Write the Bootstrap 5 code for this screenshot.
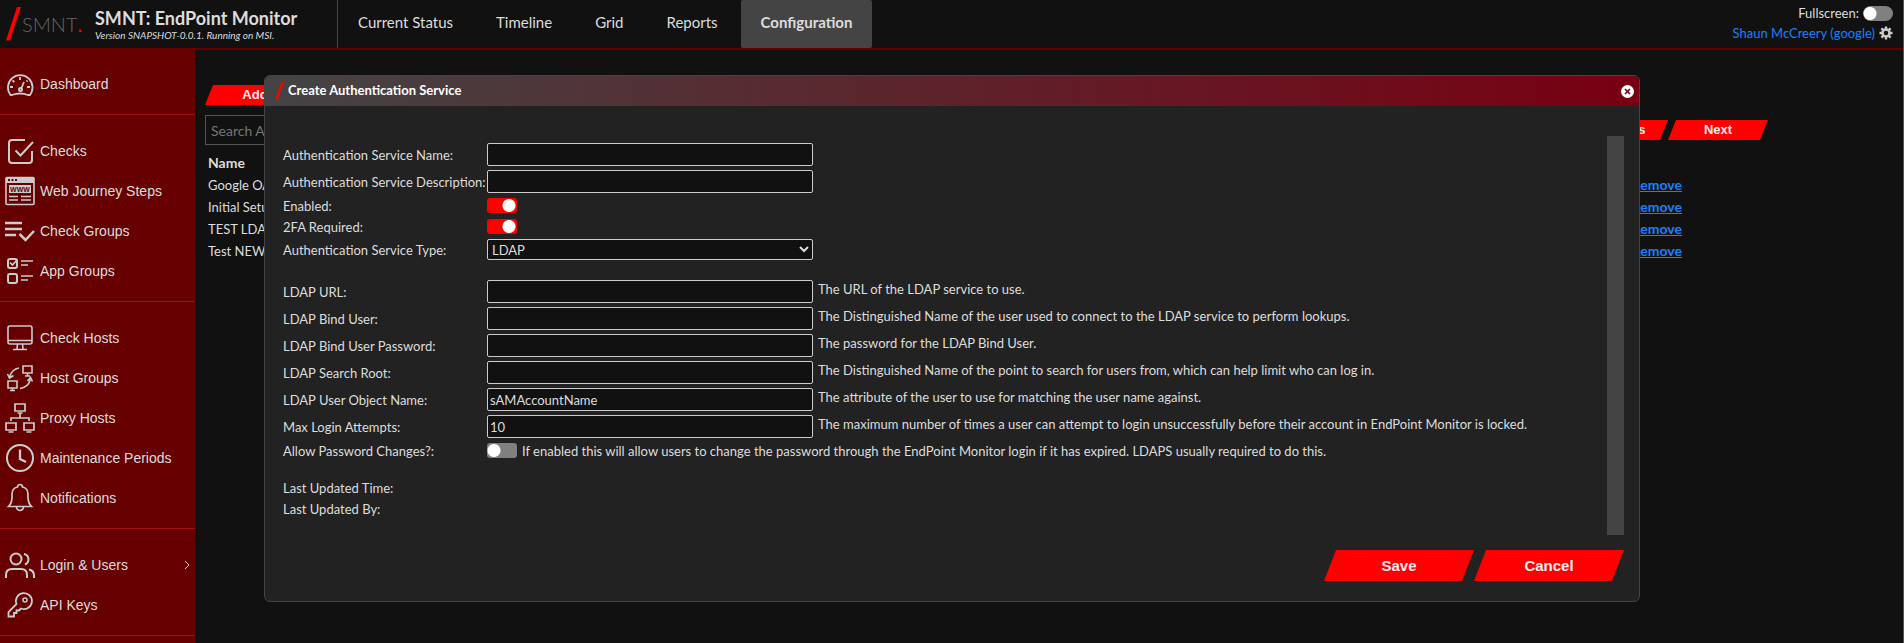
<!DOCTYPE html>
<html lang="en">
<head>
<meta charset="utf-8">
<meta name="viewport" content="width=device-width, initial-scale=1">
<title>SMNT: EndPoint Monitor</title>
<link href="https://cdn.jsdelivr.net/npm/bootstrap@5.3.0/dist/css/bootstrap.min.css" rel="stylesheet">
<style>
:root{--ink:#ddd;--maroon:#600;--panel:#222;--edge:#444}
html,body{height:100%}
body{background:#111;color:var(--ink);font:13px/20px Lato,Carlito,sans-serif;border-right:1px solid #555;overflow:hidden}
a{color:#1a80ff}
.topbar{height:50px;border-bottom:2px solid var(--maroon)}
.brand{width:338px;padding-left:6px;border-right:1px solid var(--edge)}
.brand-word{width:69px;font-size:20px;font-weight:300;color:#666;font-family:Lato,sans-serif}
.brand-word b{color:red}
.brand h1{font-size:18px;line-height:22px;font-weight:700}
.brand em{font-size:10px;line-height:12px}
.tabs{gap:3px}
.tabs .nav-link{height:48px;padding:12px 20px;color:var(--ink);font-size:15px;border-radius:2px}
.tabs .nav-link.active{background:var(--edge);font-weight:700}
.account{padding:3px 10px 0 0}
.switch{width:30px!important;height:15px!important;margin:0!important;border:0;border-radius:8px;float:none!important;background:radial-gradient(circle at 7px 50%,#fff 6px,transparent 7px),gray!important}
.switch:checked{background:radial-gradient(circle at 22px 50%,#fff 6px,transparent 7px),red!important}
.side{width:195px;background:var(--maroon);font:14px/20px "Liberation Sans",Arial,sans-serif}
.side ul{padding:16px 0 10px;border-bottom:1px solid #a01010}
.side ul:first-child{padding-top:14px}
.side .nav-link{height:40px;padding:0 5px;gap:5px;color:var(--ink)}
.side svg{width:30px;height:30px;fill:none;stroke:#ccc;stroke-width:2;flex:none}
.side .chev{width:6px;height:10px;stroke-width:1}
.side text{font:bold 7px "Liberation Sans",Arial,sans-serif;fill:var(--maroon);stroke:none}
.work{padding:35px 135px 0 10px}
.slant{width:100px;height:20px;padding:0;border:0;border-radius:0;background:red;color:#eee;font:bold 13px/20px "Liberation Sans",Arial,sans-serif;clip-path:polygon(8px 0,100% 0,calc(100% - 8px) 100%,0 100%)}
.slant.big{width:150px;height:31px;font-size:15px;line-height:31px;clip-path:polygon(12px 0,100% 0,calc(100% - 12px) 100%,0 100%)}
.tools{margin-top:10px}
.search{width:300px;height:30px;padding:0 5px;background:#111;border:1px solid #555;color:var(--ink);font-size:14px}
.search::placeholder{color:#757575}
.list{margin-top:7px}
.list th,.list td{height:22px;padding:0 3px;line-height:22px}
.list th,.list a{font-size:14px}
.list td:last-child,.list th:last-child{padding-right:86px}
.dialog{position:absolute;top:75px;left:264px;right:264px;background:var(--panel);border:1px solid var(--edge);border-radius:6px;overflow:hidden}
.dialog header{height:30px;padding:0 5px 0 10px;gap:4px;background:linear-gradient(90deg,#444,#780012)}
.dialog h2{font-size:13px;font-weight:700;color:#fff}
.shut{width:13px;height:13px;border:0;border-radius:50%;background:#fff;padding:0}
.shut svg{display:block;margin:auto}
.body-area{padding:30px 15px 20px 18px}
.form-area{height:399px;padding-top:5px}
.track{width:17px;background:var(--edge)}
.frow{display:flex;align-items:center;min-height:21px}
.frow.tall{min-height:27px}
.frow.pick{min-height:25px;margin-bottom:16px}
.frow>label,.frow>.cap{width:204px;white-space:nowrap}
.box{width:326px;height:23px;padding:0 2px;background:#111;border:1px solid #ccc;border-radius:2px;color:var(--ink)}
select.box{height:21px;padding:0}
.hint{padding:1px 0 0 5px;align-self:flex-start}
.acts{padding-top:15px}
</style>
</head>
<body class="d-flex flex-column">
<div class="topbar d-flex">
  <div class="brand d-flex align-items-center flex-shrink-0">
    <svg width="16" height="34" viewBox="0 0 16 34"><path d="M0 33.500 11 0h4L4 33.500z" fill="red"/></svg>
    <span class="brand-word">SMNT<b>.</b></span>
    <div class="ps-1"><h1 class="m-0">SMNT: EndPoint Monitor</h1><em class="d-block">Version SNAPSHOT-0.0.1. Running on MSI.</em></div>
  </div>
  <nav class="nav tabs flex-nowrap">
    <a class="nav-link" href="#">Current Status</a>
    <a class="nav-link" href="#">Timeline</a>
    <a class="nav-link" href="#">Grid</a>
    <a class="nav-link" href="#">Reports</a>
    <a class="nav-link active" href="#" aria-current="page">Configuration</a>
  </nav>
  <div class="account ms-auto d-flex flex-column align-items-end">
    <div class="form-switch p-0 d-flex align-items-center gap-1"><label for="full">Fullscreen:</label><input class="form-check-input switch" type="checkbox" role="switch" id="full"></div>
    <div class="d-flex align-items-center"><a class="text-decoration-none me-1" href="#">Shaun McCreery (google)</a>
      <svg width="14" height="14" viewBox="0 0 14 14"><g fill="none" stroke="#ccc"><circle cx="7" cy="7" r="3.500" stroke-width="2.500"/><path d="M7 .500v2.500M7 11v2.500M.500 7H3M11 7h2.500M2.400 2.400l1.800 1.800M9.800 9.800l1.800 1.800M11.600 2.400 9.800 4.200M4.200 9.800l-1.800 1.800" stroke-width="2.400"/></g></svg></div>
  </div>
</div>
<div class="d-flex flex-grow-1">
  <nav class="side flex-shrink-0" aria-label="Sections">
    <ul class="nav flex-column">
      <li><a class="nav-link d-flex align-items-center" href="#"><svg viewBox="0 0 30 30"><path d="M7 26H5.500A12.300 12.300 0 1 1 25 26H22.500M7 26q8-3 16 0M15 8v3M7.500 11.500l2 1.500M22.500 11.500l-1 1M5 18h3M22 18h3M16 20l3-7" stroke-width="1.800"/><circle cx="15.500" cy="20.500" r="1.500"/></svg>Dashboard</a></li>
    </ul>
    <ul class="nav flex-column">
      <li><a class="nav-link d-flex align-items-center" href="#"><svg viewBox="0 0 30 30"><path d="M20 4H7a3 3 0 0 0-3 3v17a3 3 0 0 0 3 3h17a3 3 0 0 0 3-3V15M10.500 14.500l5 5L28 6"/></svg>Checks</a></li>
      <li><a class="nav-link d-flex align-items-center" href="#"><svg viewBox="0 0 30 30"><rect x="1" y="1.500" width="28" height="27" rx="1" stroke-width="1.600"/><path d="M1 4.500h28" stroke-width="5"/><path d="M3 4h2M6.500 4h2M10 4h2" stroke="#600"/><rect x="4" y="9" width="22" height="8" fill="#ccc" stroke="none"/><text x="15" y="15.500" text-anchor="middle">WWW</text><path d="M4 20.500h9M4 24h9M16 20.500h10M16 24h10" stroke-width="1.700"/></svg>Web Journey Steps</a></li>
      <li><a class="nav-link d-flex align-items-center" href="#"><svg viewBox="0 0 30 30"><path d="M0 7h17M0 13h17M0 19h11M14.500 18l6 6 8.500-9" stroke-width="2.500"/></svg>Check Groups</a></li>
      <li><a class="nav-link d-flex align-items-center" href="#"><svg viewBox="0 0 30 30"><rect x="3" y="3" width="9" height="9" rx="2"/><rect x="3" y="18" width="9" height="9" rx="2"/><path d="M5 6.500l2.500 2.500 4-4.500M16 5h12M16 9h7M16 20h12M16 24h7" stroke-width="1.700"/></svg>App Groups</a></li>
    </ul>
    <ul class="nav flex-column">
      <li><a class="nav-link d-flex align-items-center" href="#"><svg viewBox="0 0 30 30"><path d="M5 3h20a2 2 0 0 1 2 2v14a2 2 0 0 1-2 2H5a2 2 0 0 1-2-2V5a2 2 0 0 1 2-2zM3 17.500h24M12.500 21l-.500 5M17.500 21l.500 5M8 26.500h14" stroke-width="1.600"/></svg>Check Hosts</a></li>
      <li><a class="nav-link d-flex align-items-center" href="#"><svg viewBox="0 0 30 30"><path stroke-width="1.600" d="M18 3h9v7h-9zM20 13h5M22.500 10v3M3 18h9v7H3zM5 27.500h5M7.500 25v2M14 5Q7 6 4.500 14M2.500 11l2 4 4-2.500M15 25.500q8-1 10.500-9M22.500 18l3-3.500 2 4"/></svg>Host Groups</a></li>
      <li><a class="nav-link d-flex align-items-center" href="#"><svg viewBox="0 0 30 30"><path d="M10 1h10v7H10zM12.500 10h5M15 10v5M6 18v-3h18v3M1 20h10v7H1zM19 20h10v7H19zM3.500 29h5M21.500 29h5" stroke-width="1.700"/></svg>Proxy Hosts</a></li>
      <li><a class="nav-link d-flex align-items-center" href="#"><svg viewBox="0 0 30 30"><circle cx="15" cy="15" r="13"/><path d="M15 6.500V16l6 3" stroke-width="2.300"/></svg>Maintenance Periods</a></li>
      <li><a class="nav-link d-flex align-items-center" href="#"><svg viewBox="0 0 30 30"><path d="M3.500 23.500Q7 20 7 14v-2.500Q7 5 12.500 4a2.500 2.500 0 0 1 5 0Q23 5 23 11.500V14q0 6 3.500 9.500zM11.500 24a3.500 3.500 0 0 0 7 0" stroke-width="1.700"/></svg>Notifications</a></li>
    </ul>
    <ul class="nav flex-column">
      <li><a class="nav-link d-flex align-items-center" href="#"><svg viewBox="0 0 30 30"><circle cx="11" cy="9" r="5.500"/><path d="M1 28v-3q0-6 6-6h9q6 0 6 6v3M19 4a5.500 5.500 0 0 1 1 10.500M24 19.500q5 1 5 6V28"/></svg>Login &amp; Users<svg class="chev ms-auto" viewBox="0 0 6 10"><path d="M1 1l4 4-4 4"/></svg></a></li>
      <li><a class="nav-link d-flex align-items-center" href="#"><svg viewBox="0 0 30 30"><path d="M11.500 14A8 8 0 1 1 16 18.500L14 20.500h-2.500V23H9v3.500H3.500V22z" stroke-width="1.800"/><circle cx="20" cy="10" r="2" stroke-width="1.500"/></svg>API Keys</a></li>
    </ul>
  </nav>
  <main class="work flex-grow-1">
    <button class="slant d-block" type="button">Add</button>
    <div class="tools d-flex justify-content-between align-items-center">
      <input class="search" type="search" placeholder="Search Authentication Services" aria-label="Search Authentication Services">
      <div class="d-flex"><button class="slant" type="button">Previous</button><button class="slant" type="button">Next</button></div>
    </div>
    <table class="list w-100">
      <thead><tr><th>Name</th><th></th></tr></thead>
      <tbody>
        <tr><td>Google OAuth</td><td class="text-end"><a class="fw-bold" href="#">Remove</a></td></tr>
        <tr><td>Initial Setup</td><td class="text-end"><a class="fw-bold" href="#">Remove</a></td></tr>
        <tr><td>TEST LDAP</td><td class="text-end"><a class="fw-bold" href="#">Remove</a></td></tr>
        <tr><td>Test NEW</td><td class="text-end"><a class="fw-bold" href="#">Remove</a></td></tr>
      </tbody>
    </table>
  </main>
</div>
<section class="dialog" role="dialog" aria-labelledby="dlg">
  <header class="d-flex align-items-center">
    <svg width="9" height="18" viewBox="0 0 9 18"><path d="M0 18 6.500 0H9L2.500 18z" fill="red"/></svg>
    <h2 class="m-0" id="dlg">Create Authentication Service</h2>
    <button class="shut ms-auto" type="button" aria-label="Close"><svg width="7" height="7" viewBox="0 0 7 7"><path d="M1 1l5 5M6 1 1 6" stroke="#700010" stroke-width="1.600"/></svg></button>
  </header>
  <div class="body-area">
    <div class="d-flex">
      <form class="form-area flex-grow-1">
        <div class="frow tall"><label for="a1">Authentication Service Name:</label><input class="box" id="a1"></div>
        <div class="frow tall"><label for="a2">Authentication Service Description:</label><input class="box" id="a2"></div>
        <div class="frow"><label for="a3">Enabled:</label><input class="form-check-input switch" type="checkbox" id="a3" checked></div>
        <div class="frow"><label for="a4">2FA Required:</label><input class="form-check-input switch" type="checkbox" id="a4" checked></div>
        <div class="frow pick"><label for="a5">Authentication Service Type:</label><select class="box" id="a5"><option>LDAP</option></select></div>
        <div class="frow tall"><label for="b1">LDAP URL:</label><input class="box" id="b1"><span class="hint">The URL of the LDAP service to use.</span></div>
        <div class="frow tall"><label for="b2">LDAP Bind User:</label><input class="box" id="b2"><span class="hint">The Distinguished Name of the user used to connect to the LDAP service to perform lookups.</span></div>
        <div class="frow tall"><label for="b3">LDAP Bind User Password:</label><input class="box" type="password" id="b3"><span class="hint">The password for the LDAP Bind User.</span></div>
        <div class="frow tall"><label for="b4">LDAP Search Root:</label><input class="box" id="b4"><span class="hint">The Distinguished Name of the point to search for users from, which can help limit who can log in.</span></div>
        <div class="frow tall"><label for="b5">LDAP User Object Name:</label><input class="box" id="b5" value="sAMAccountName"><span class="hint">The attribute of the user to use for matching the user name against.</span></div>
        <div class="frow tall"><label for="b6">Max Login Attempts:</label><input class="box" id="b6" value="10"><span class="hint">The maximum number of times a user can attempt to login unsuccessfully before their account in EndPoint Monitor is locked.</span></div>
        <div class="frow mb-3"><label for="b7">Allow Password Changes?:</label><input class="form-check-input switch" type="checkbox" id="b7"><span class="hint">If enabled this will allow users to change the password through the EndPoint Monitor login if it has expired. LDAPS usually required to do this.</span></div>
        <div class="frow"><span class="cap">Last Updated Time:</span></div>
        <div class="frow"><span class="cap">Last Updated By:</span></div>
      </form>
      <div class="track"></div>
    </div>
    <div class="acts d-flex justify-content-end"><button class="slant big" type="button">Save</button><button class="slant big" type="button">Cancel</button></div>
  </div>
</section>
<script src="https://cdn.jsdelivr.net/npm/bootstrap@5.3.0/dist/js/bootstrap.bundle.min.js"></script>
</body>
</html>
